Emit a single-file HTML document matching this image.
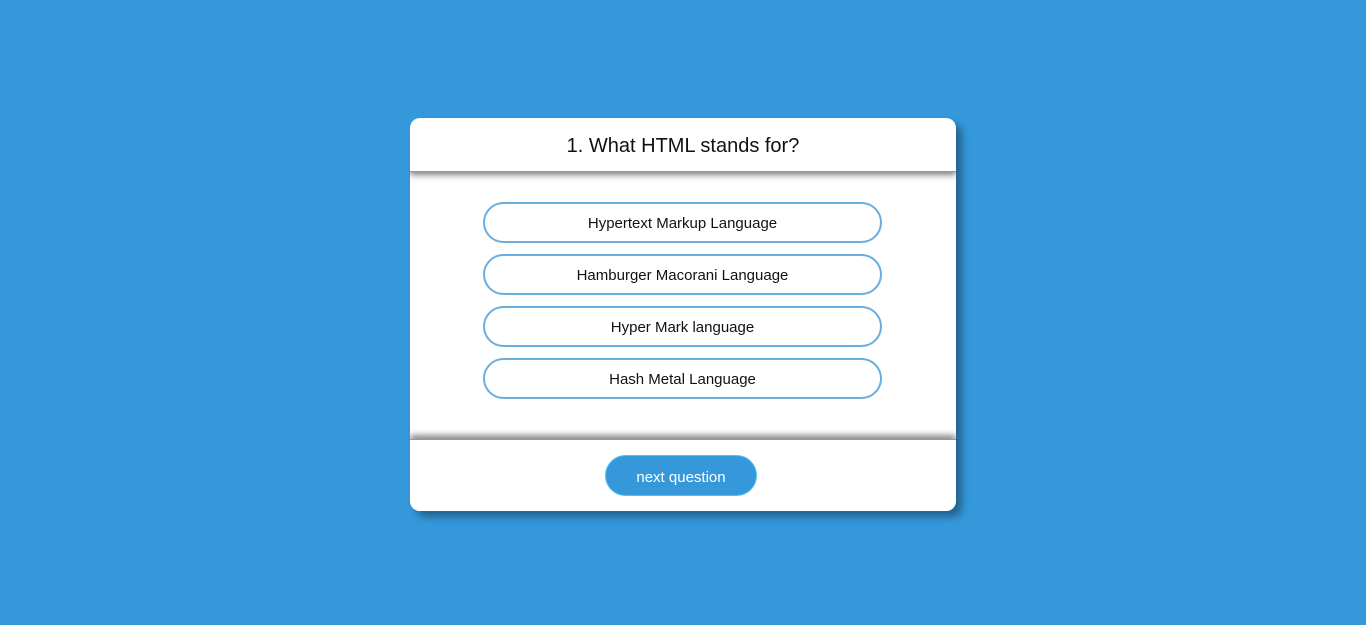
<!DOCTYPE html>
<html><head><style>
html,body{margin:0;height:100%;background:#3598db;font-family:"Liberation Sans",sans-serif}
.card{position:absolute;left:410px;top:118px;width:546px;height:393px;background:#fff;border-radius:10px;box-shadow:6px 6px 8px rgba(0,0,0,.35);overflow:hidden}
.head{height:53px;line-height:56px;text-align:center;font-size:20px;color:#111;box-shadow:0 3px 6px rgba(0,0,0,.5);position:relative;z-index:2;border-bottom:1px solid #999}
.opt{position:absolute;left:73px;width:395px;height:37px;border:2px solid #6aaee0;border-radius:21px;text-align:center;line-height:40px;font-size:15px;color:#111}
.foot{position:absolute;left:0;top:321px;width:546px;height:72px;background:#fff;border-top:1px solid #999;box-shadow:0 -4px 6px rgba(0,0,0,.45)}
.btn{position:absolute;left:195px;top:15px;width:150px;height:39px;border:1px solid #55c0ee;border-radius:21px;background:#3598db;color:#fff;text-align:center;line-height:43px;font-size:15px}
</style></head><body>
<div class="card">
<div class="head">1. What HTML stands for?</div>
<div class="opt" style="top:84px">Hypertext Markup Language</div>
<div class="opt" style="top:136px">Hamburger Macorani Language</div>
<div class="opt" style="top:188px">Hyper Mark language</div>
<div class="opt" style="top:240px">Hash Metal Language</div>
<div class="foot"><div class="btn">next question</div></div>
</div>
</body></html>
